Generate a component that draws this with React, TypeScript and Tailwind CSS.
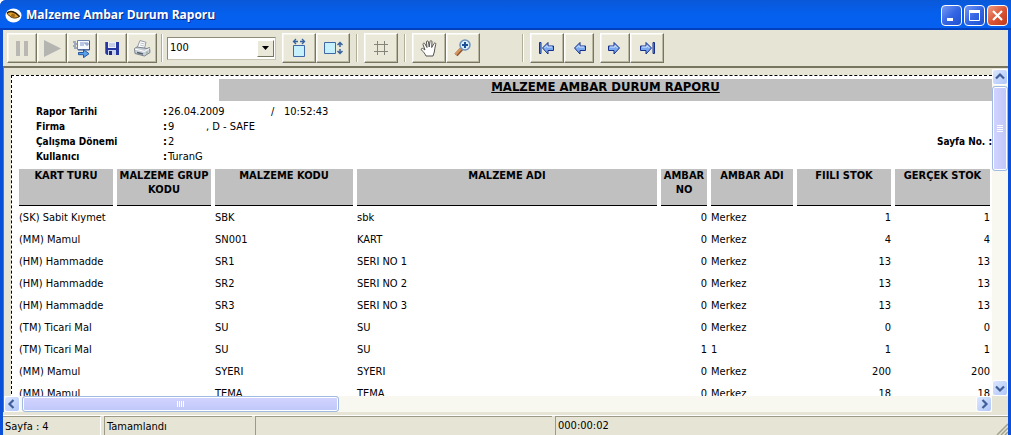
import type { ReactNode } from "react";
import clsx from "clsx";

interface Row {
  type: string;
  code: string;
  name: string;
  no: string;
  depot: string;
  actual: string;
  real: string;
}

const rows: Row[] = [
  { type: "(SK) Sabit Kıymet", code: "SBK", name: "sbk", no: "0", depot: "Merkez", actual: "1", real: "1" },
  { type: "(MM) Mamul", code: "SN001", name: "KART", no: "0", depot: "Merkez", actual: "4", real: "4" },
  { type: "(HM) Hammadde", code: "SR1", name: "SERI NO 1", no: "0", depot: "Merkez", actual: "13", real: "13" },
  { type: "(HM) Hammadde", code: "SR2", name: "SERI NO 2", no: "0", depot: "Merkez", actual: "13", real: "13" },
  { type: "(HM) Hammadde", code: "SR3", name: "SERI NO 3", no: "0", depot: "Merkez", actual: "13", real: "13" },
  { type: "(TM) Ticari Mal", code: "SU", name: "SU", no: "0", depot: "Merkez", actual: "0", real: "0" },
  { type: "(TM) Ticari Mal", code: "SU", name: "SU", no: "1", depot: "1", actual: "1", real: "1" },
  { type: "(MM) Mamul", code: "SYERI", name: "SYERI", no: "0", depot: "Merkez", actual: "200", real: "200" },
  { type: "(MM) Mamul", code: "TEMA", name: "TEMA", no: "0", depot: "Merkez", actual: "18", real: "18" },
];

const columns = [
  { label: "KART TURU", width: "w-[94px]" },
  { label: "MALZEME GRUP KODU", width: "w-[94px]" },
  { label: "MALZEME KODU", width: "w-[138px]" },
  { label: "MALZEME ADI", width: "" },
  { label: "AMBAR NO", width: "w-[46px]" },
  { label: "AMBAR ADI", width: "w-[82px]" },
  { label: "FIILI STOK", width: "w-[94px]" },
  { label: "GERÇEK STOK", width: "w-[95px]" },
];

function ToolButton({ label, narrow, children }: { label: string; narrow?: boolean; children: ReactNode }) {
  return (
    <button
      type="button"
      aria-label={label}
      title={label}
      className={clsx(
        "flex h-[30px] shrink-0 items-center justify-center border border-t-white border-l-white border-r-[#77745f] border-b-[#77745f] bg-[#e9e8d9] shadow-[inset_-1px_-1px_0_#bab7a3,inset_1px_1px_0_#f6f5ec]",
        narrow ? "w-[30px]" : "w-[34px]"
      )}
    >
      {children}
    </button>
  );
}

function Separator() {
  return <div className="h-7 w-[2px] shrink-0 border-l border-r border-l-[#b0ad99] border-r-white" />;
}

function PauseIcon() {
  return (
    <svg width="20" height="20" viewBox="0 0 20 20" fill="#b9b8b3">
      <path d="M4 3h4v15H4zM12 3h4v15h-4z" />
    </svg>
  );
}

function PlayIcon() {
  return (
    <svg width="20" height="20" viewBox="0 0 20 20">
      <path d="M2 2l17 8.500L2 19z" fill="#b4b4b0" />
    </svg>
  );
}

function ExportIcon() {
  return (
    <svg width="20" height="20" viewBox="0 0 20 20">
      <path d="M5.500 2.500h12v9h-12z" fill="#f7faff" stroke="#7084b0" />
      <path d="M17.500 3v9H6" fill="none" stroke="#3b5492" />
      <path d="M8 5h6M8 7h4M14 5h2v2h-2z" stroke="#7d93c4" fill="none" />
      <path d="M1 4h3M2 6h3M1 8h3M2 10h3" stroke="#536a9b" />
      <path d="M6.500 14.500h5v-3l5.500 4.200-5.500 4v-3h-5z" fill="#58a2e8" stroke="#2558a4" />
    </svg>
  );
}

function SaveIcon() {
  return (
    <svg width="18" height="18" viewBox="0 0 18 18">
      <path d="M2 3h14v13H4l-2-2z" fill="#2638a0" />
      <path d="M5 3h8v6H5z" fill="#edf0fb" />
      <path d="M6 5h6M6 7h6" stroke="#9faad4" />
      <path d="M5 11h8v5H5z" fill="#cbd2ed" />
      <path d="M6 12h3v4H6z" fill="#1d2b79" />
      <path d="M2.500 3v11" stroke="#5265ca" />
    </svg>
  );
}

function PrintIcon() {
  return (
    <svg width="20" height="20" viewBox="0 0 20 20">
      <path d="M5 10L8 2.500l6 1.800-1.500 6z" fill="#fff" stroke="#9299a2" />
      <path d="M8.500 5l4 1M8 7l4 1" stroke="#b8c1cc" />
      <path d="M2.500 10.500L5 9l10 1.500 2.500-1 .5 5-5.500 3.500-9.500-2.500z" fill="#c9d0d8" stroke="#7a838e" />
      <path d="M3 11l9.500 2.500 5-3" fill="none" stroke="#fff" />
      <path d="M5 14.500l6 1.500" stroke="#55606e" strokeWidth="1.500" />
      <path d="M15 13.500v2" stroke="#69a56d" />
    </svg>
  );
}

function FitWidthIcon() {
  return (
    <svg width="20" height="20" viewBox="0 0 20 20">
      <path d="M4.500 7.500h11v11h-11z" fill="#c6f0fc" stroke="#3f68a8" />
      <path d="M7 1L4.500 3.500 7 6M13 1l2.500 2.500L13 6M4.500 3.500H9M11 3.500h4.500" fill="none" stroke="#36629f" strokeWidth="1.300" />
    </svg>
  );
}

function FitPageIcon() {
  return (
    <svg width="20" height="20" viewBox="0 0 20 20">
      <path d="M1.500 4.500h11v11h-11z" fill="#c6f0fc" stroke="#3f68a8" />
      <path d="M14.500 7L17 4.500 19.500 7M14.500 13l2.500 2.500 2.500-2.500M17 5v4M17 11v4" fill="none" stroke="#36629f" strokeWidth="1.500" />
    </svg>
  );
}

function GridIcon() {
  return (
    <svg width="18" height="18" viewBox="0 0 18 18">
      <path d="M5.500 2v14M12.500 2v14M2 5.500h14M2 12.500h14" stroke="#85847b" />
    </svg>
  );
}

function HandIcon() {
  return (
    <svg width="20" height="20" viewBox="0 0 20 20">
      <path
        d="M7 18c-1-2.500-2.500-4-4.500-6-.8-1.200.6-2.200 1.800-1.200L6 12 4 6.500c-.3-1.300 1.300-1.900 1.900-.7L8 9.500 7.500 4c0-1.400 1.700-1.400 2 0l.7 5 .8-5.500c.3-1.200 2-1 2 .3L12.700 9.500 15 5.500c.7-1.200 2.200-.4 1.700.9-.7 2.500-1 5.100-1.400 7.600-.3 1.500-1 2.500-1.300 4z"
        fill="#fff"
        stroke="#55534e"
      />
    </svg>
  );
}

function ZoomIcon() {
  return (
    <svg width="20" height="20" viewBox="0 0 20 20">
      <path d="M8.500 11L3 17" stroke="#8a5533" strokeWidth="4" />
      <path d="M8 10.500L2.500 16.500" stroke="#d9965f" strokeWidth="2.500" />
      <circle cx="12" cy="7" r="5" fill="#d8effa" stroke="#6f91bb" strokeWidth="1.500" />
      <path d="M9 7h6M12 4v6" stroke="#1d5196" strokeWidth="2" />
    </svg>
  );
}

function ArrowIcon({ right, bar }: { right?: boolean; bar?: boolean }) {
  return (
    <svg width="18" height="18" viewBox="0 0 18 18" className={clsx(right && "-scale-x-100")}>
      <path d="M4.500 9L10 3.500V7h5.500v4.500H10V15z" fill="#7ba8ef" stroke="#16318c" />
      <path d="M6.500 9L9 6.500V8h5" fill="none" stroke="#d5e7ff" />
      {bar && <path d="M1.500 3.500h1.500v11H1.500z" fill="#7ba8ef" stroke="#16318c" />}
    </svg>
  );
}

function ScrollButton({ label, path }: { label: string; path: string }) {
  return (
    <button
      type="button"
      aria-label={label}
      className="flex h-4 w-4 shrink-0 items-center justify-center rounded-[3px] border border-white bg-linear-to-br from-[#dce7ff] to-[#b0c6f8]"
    >
      <svg width="12" height="12" viewBox="0 0 12 12" fill="none" stroke="#405f98" strokeWidth="2.200">
        <path d={path} />
      </svg>
    </button>
  );
}

function CaptionButton({ label, close, children }: { label: string; close?: boolean; children: ReactNode }) {
  return (
    <button
      type="button"
      aria-label={label}
      className={clsx(
        "flex h-[21px] w-[21px] items-center justify-center rounded-[4px] border border-white",
        close
          ? "bg-linear-to-br from-[#ee9a80] via-[#dc5636] to-[#c03a18]"
          : "bg-linear-to-br from-[#7698f4] via-[#3566e4] to-[#1d50d0]"
      )}
    >
      <svg width="17" height="17" viewBox="0 0 17 17" fill="none" stroke="#fff">
        {children}
      </svg>
    </button>
  );
}

function TitleBar() {
  return (
    <header className="flex h-[30px] shrink-0 items-center justify-between border-b-2 border-[#0340bd] bg-linear-to-b from-[#0a58d8] via-[#0560ee] to-[#055ff0] pt-[2px] pr-[3px] pl-[5px]">
      <div className="flex items-center gap-1">
        <svg width="17" height="17" viewBox="0 0 17 17">
          <ellipse cx="8.500" cy="8.500" rx="8" ry="7" fill="#fff" />
          <path d="M2 6c3-2.500 8-2 12.500 3.500C10 12.500 5 11 2 6z" fill="#e0a02e" stroke="#4a3313" />
          <path d="M2 6c3-2.500 8-2 12.500 3.500" fill="none" stroke="#30210d" strokeWidth="1.500" />
          <circle cx="8" cy="8.500" r="2" fill="#a56a18" />
        </svg>
        <h1 className="font-['Open_Sans',sans-serif] text-[12px] leading-5 font-bold whitespace-nowrap text-white [text-shadow:1px_1px_0_#0a2a80]">
          Malzeme Ambar Durum Raporu
        </h1>
      </div>
      <div className="flex gap-[2px] pt-[1px]">
        <CaptionButton label="Simge durumuna küçült">
          <path d="M4 12.500h6" strokeWidth="3" />
        </CaptionButton>
        <CaptionButton label="Ekranı kapla">
          <path d="M3.500 4v9.500h10V4" />
          <path d="M3 4.500h11" strokeWidth="3" />
        </CaptionButton>
        <CaptionButton label="Kapat" close>
          <path d="M4 4l9 9M13 4l-9 9" strokeWidth="2.200" />
        </CaptionButton>
      </div>
    </header>
  );
}

function Toolbar() {
  return (
    <div className="flex h-[38px] shrink-0 items-center border-b-2 border-b-[#77745f] px-1">
      <div className="flex">
        <ToolButton label="Duraklat" narrow><PauseIcon /></ToolButton>
        <ToolButton label="Devam" narrow><PlayIcon /></ToolButton>
        <ToolButton label="Dışa aktar" narrow><ExportIcon /></ToolButton>
        <ToolButton label="Kaydet" narrow><SaveIcon /></ToolButton>
        <ToolButton label="Yazdır" narrow><PrintIcon /></ToolButton>
      </div>
      <div className="ml-1 flex items-center gap-1">
        <Separator />
        <div className="relative">
          <select
            aria-label="Yakınlaştırma"
            defaultValue="100"
            className="block h-[23px] w-[109px] appearance-none border border-t-[#8d8a78] border-r-[#c8c5b2] border-b-[#c8c5b2] border-l-[#8d8a78] bg-white pl-[2px] text-[11px] leading-4"
          >
            <option>50</option>
            <option>100</option>
            <option>200</option>
          </select>
          <span className="pointer-events-none absolute top-[3px] right-[2px] flex h-[17px] w-[17px] items-center justify-center border border-t-white border-r-[#77745f] border-b-[#77745f] border-l-white bg-[#e9e8d9]">
            <svg width="7" height="4" viewBox="0 0 7 4">
              <path d="M0 0h7L3.500 4z" />
            </svg>
          </span>
        </div>
      </div>
      <div className="ml-[6px] flex">
        <ToolButton label="Sayfa genişliği"><FitWidthIcon /></ToolButton>
        <ToolButton label="Tam sayfa"><FitPageIcon /></ToolButton>
      </div>
      <div className="ml-[6px] flex items-center gap-[6px]">
        <Separator />
        <ToolButton label="Izgara"><GridIcon /></ToolButton>
        <Separator />
      </div>
      <div className="ml-[6px] flex">
        <ToolButton label="Taşı"><HandIcon /></ToolButton>
        <ToolButton label="Büyüt"><ZoomIcon /></ToolButton>
      </div>
      <div className="ml-[42px] flex items-center gap-[6px]">
        <Separator />
        <div className="flex">
          <ToolButton label="İlk sayfa"><ArrowIcon bar /></ToolButton>
          <ToolButton label="Önceki sayfa" narrow><ArrowIcon /></ToolButton>
        </div>
        <div className="flex">
          <ToolButton label="Sonraki sayfa" narrow><ArrowIcon right /></ToolButton>
          <ToolButton label="Son sayfa"><ArrowIcon right bar /></ToolButton>
        </div>
      </div>
    </div>
  );
}

function ReportHead() {
  return (
    <>
      <h2 className="mt-[3px] ml-[207px] h-[22px] bg-[#c0c0c0] text-center text-[13px] leading-4 font-bold underline">
        MALZEME AMBAR DURUM RAPORU
      </h2>
      <div className="mt-[3px] flex items-end justify-between pl-6">
        <dl className="grid grid-cols-[127px_auto] text-[11px] leading-[15px]">
          <dt className="text-[10px] font-bold">Rapor Tarihi</dt>
          <dd className="flex gap-px">
            <b>:</b>
            <span className="w-[102px]">26.04.2009</span>
            <span className="w-[12px]">/</span>
            <span>10:52:43</span>
          </dd>
          <dt className="text-[10px] font-bold">Firma</dt>
          <dd className="flex gap-px">
            <b>:</b>
            <span className="w-[37px]">9</span>
            <span>, D - SAFE</span>
          </dd>
          <dt className="text-[10px] font-bold">Çalışma Dönemi</dt>
          <dd className="flex gap-px"><b>:</b><span>2</span></dd>
          <dt className="text-[10px] font-bold">Kullanıcı</dt>
          <dd className="flex gap-px"><b>:</b><span>TuranG</span></dd>
        </dl>
        <p className="pb-[15px] text-[10px] leading-[15px] font-bold">Sayfa No. :</p>
      </div>
    </>
  );
}

function ReportTable() {
  return (
    <div className="-mr-[2px] mt-[5px] pl-[3px]">
      <table className="w-full table-fixed border-separate border-spacing-x-1 border-spacing-y-0 text-[11px]">
        <thead>
          <tr>
            {columns.map((column) => (
              <th
                key={column.label}
                scope="col"
                className={clsx("h-[37px] border-b border-black bg-[#c0c0c0] p-0 align-top leading-[14px] font-bold", column.width)}
              >
                {column.label}
              </th>
            ))}
          </tr>
        </thead>
        <tbody className="whitespace-nowrap">
          {rows.map((row, index) => (
            <tr key={index} className="h-[22px]">
              <td className="p-0 pt-[2px]">{row.type}</td>
              <td className="p-0 pt-[2px]" />
              <td className="p-0 pt-[2px]">{row.code}</td>
              <td className="p-0 pt-[2px]">{row.name}</td>
              <td className="p-0 pt-[2px] text-right">{row.no}</td>
              <td className="p-0 pt-[2px]">{row.depot}</td>
              <td className="p-0 pt-[2px] text-right">{row.actual}</td>
              <td className="p-0 pt-[2px] text-right">{row.real}</td>
            </tr>
          ))}
        </tbody>
      </table>
    </div>
  );
}

function StatusBar() {
  return (
    <footer className="flex h-[19px] shrink-0 items-stretch gap-[3px] text-[11px] leading-[19px]">
      <div className="w-[98px] border-t border-r border-t-[#9c9a86] border-r-white pl-[2px]">Sayfa : 4</div>
      <div className="w-[148px] border-t border-l border-[#9c9a86] pl-[2px]">Tamamlandı</div>
      <div className="w-[297px] border-t border-l border-[#9c9a86]" />
      <div className="flex flex-1 items-end justify-between border-t border-l border-[#9c9a86] pl-[2px]">
        <span>000:00:02</span>
        <svg width="12" height="12" viewBox="0 0 12 12" stroke="#a3a18e" strokeWidth="1.500">
          <path d="M1 12L12 1M5 12l7-7M9 12l3-3" />
        </svg>
      </div>
    </footer>
  );
}

export default function App() {
  return (
    <div className="flex h-screen flex-col overflow-hidden rounded-tl-[6px] bg-[#0a50d8] font-['DejaVu_Sans_Condensed','DejaVu_Sans',sans-serif] text-black">
      <TitleBar />
      <main className="mr-[3px] ml-[3px] flex min-h-0 flex-1 flex-col bg-[#e6e5d5]">
        <Toolbar />
        <div className="flex min-h-0 flex-1 border-l border-[#77745f]">
          <div className="flex min-w-0 flex-1 flex-col">
            <div className="min-h-0 flex-1 overflow-hidden pt-[7px] pl-[7px]">
              <div className="min-h-full border-t border-l border-dashed border-black bg-white">
                <ReportHead />
                <ReportTable />
              </div>
            </div>
            <div className="flex h-4 shrink-0 bg-[#f8f7f0]">
              <ScrollButton label="Sola kaydır" path="M7.500 2L3.500 6l4 4" />
              <div className="ml-[2px] flex w-[317px] items-center justify-center gap-px rounded-[3px] border border-[#9fbbe4] bg-linear-to-b from-[#d3d3ff] to-[#bfc8f8] ring-1 ring-white ring-inset">
                <i className="h-[6px] w-px bg-white" />
                <i className="h-[6px] w-px bg-white" />
                <i className="h-[6px] w-px bg-white" />
                <i className="h-[6px] w-px bg-white" />
              </div>
              <div className="flex-1" />
              <ScrollButton label="Sağa kaydır" path="M4.500 2l4 4-4 4" />
            </div>
          </div>
          <div className="mt-[1px] mb-4 flex w-4 shrink-0 flex-col bg-[#f8f7f0]">
            <ScrollButton label="Yukarı kaydır" path="M2 7.500l4-4 4 4" />
            <div className="mt-px flex h-[85px] flex-col items-center justify-center gap-px rounded-[3px] border border-[#9fbbe4] bg-linear-to-r from-[#d3d3ff] to-[#bfc8f8] ring-1 ring-white ring-inset">
              <i className="h-px w-[6px] bg-white" />
              <i className="h-px w-[6px] bg-white" />
              <i className="h-px w-[6px] bg-white" />
              <i className="h-px w-[6px] bg-white" />
            </div>
            <div className="flex-1" />
            <ScrollButton label="Aşağı kaydır" path="M2 4.500l4 4 4-4" />
          </div>
        </div>
        <div className="h-1 shrink-0 border-b border-white" />
        <StatusBar />
      </main>
    </div>
  );
}
